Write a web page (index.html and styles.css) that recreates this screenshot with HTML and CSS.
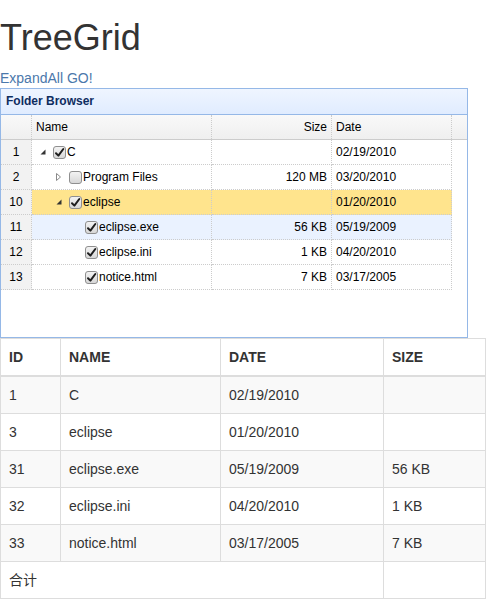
FILE: index.html
```html
<!DOCTYPE html>
<html>
<head>
<meta charset="utf-8">
<title>TreeGrid</title>
<link rel="stylesheet" href="styles.css">
</head>
<body>
<h1 class="title">TreeGrid</h1>
<div class="links"><a href="#">ExpandAll</a> <a href="#">GO!</a></div>

<div class="panel">
  <div class="panel-header">Folder Browser</div>
  <div class="panel-body">
    <div class="grid-head">
      <div class="c rn"></div>
      <div class="c name">Name</div>
      <div class="c size">Size</div>
      <div class="c date">Date</div>
    </div>

    <div class="row">
      <div class="c rn">1</div>
      <div class="c name">
        <span class="hit"><svg width="16" height="16" viewBox="0 0 16 16"><polygon points="10.5,5.5 10.5,10.5 5.5,10.5" fill="#333"/></svg></span>
        <span class="chk"><svg width="16" height="16" viewBox="0 0 16 16"><use href="#cb-on"/></svg></span>
        <span class="txt">C</span>
      </div>
      <div class="c size"></div>
      <div class="c date">02/19/2010</div>
    </div>

    <div class="row">
      <div class="c rn">2</div>
      <div class="c name">
        <span class="indent"></span>
        <span class="hit"><svg width="16" height="16" viewBox="0 0 16 16"><polygon points="5.5,4.5 9.5,8 5.5,11.5" fill="none" stroke="#8a8a8a" stroke-width="1"/></svg></span>
        <span class="chk"><svg width="16" height="16" viewBox="0 0 16 16"><use href="#cb-off"/></svg></span>
        <span class="txt">Program Files</span>
      </div>
      <div class="c size">120 MB</div>
      <div class="c date">03/20/2010</div>
    </div>

    <div class="row selected">
      <div class="c rn">10</div>
      <div class="c name">
        <span class="indent"></span>
        <span class="hit"><svg width="16" height="16" viewBox="0 0 16 16"><polygon points="10.5,5.5 10.5,10.5 5.5,10.5" fill="#333"/></svg></span>
        <span class="chk"><svg width="16" height="16" viewBox="0 0 16 16"><use href="#cb-on"/></svg></span>
        <span class="txt">eclipse</span>
      </div>
      <div class="c size"></div>
      <div class="c date">01/20/2010</div>
    </div>

    <div class="row hover">
      <div class="c rn">11</div>
      <div class="c name">
        <span class="indent"></span><span class="indent"></span><span class="indent"></span>
        <span class="chk"><svg width="16" height="16" viewBox="0 0 16 16"><use href="#cb-on"/></svg></span>
        <span class="txt">eclipse.exe</span>
      </div>
      <div class="c size">56 KB</div>
      <div class="c date">05/19/2009</div>
    </div>

    <div class="row">
      <div class="c rn">12</div>
      <div class="c name">
        <span class="indent"></span><span class="indent"></span><span class="indent"></span>
        <span class="chk"><svg width="16" height="16" viewBox="0 0 16 16"><use href="#cb-on"/></svg></span>
        <span class="txt">eclipse.ini</span>
      </div>
      <div class="c size">1 KB</div>
      <div class="c date">04/20/2010</div>
    </div>

    <div class="row">
      <div class="c rn">13</div>
      <div class="c name">
        <span class="indent"></span><span class="indent"></span><span class="indent"></span>
        <span class="chk"><svg width="16" height="16" viewBox="0 0 16 16"><use href="#cb-on"/></svg></span>
        <span class="txt">notice.html</span>
      </div>
      <div class="c size">7 KB</div>
      <div class="c date">03/17/2005</div>
    </div>
  </div>
</div>

<table class="table">
  <colgroup>
    <col class="w-id"><col class="w-name"><col class="w-date"><col class="w-size">
  </colgroup>
  <thead>
    <tr><th>ID</th><th>NAME</th><th>DATE</th><th>SIZE</th></tr>
  </thead>
  <tbody>
    <tr class="odd"><td>1</td><td>C</td><td>02/19/2010</td><td></td></tr>
    <tr><td>3</td><td>eclipse</td><td>01/20/2010</td><td></td></tr>
    <tr class="odd"><td>31</td><td>eclipse.exe</td><td>05/19/2009</td><td>56 KB</td></tr>
    <tr><td>32</td><td>eclipse.ini</td><td>04/20/2010</td><td>1 KB</td></tr>
    <tr class="odd"><td>33</td><td>notice.html</td><td>03/17/2005</td><td>7 KB</td></tr>
    <tr><td colspan="3" class="total">合计</td><td></td></tr>
  </tbody>
</table>

<svg class="defs" width="0" height="0">
  <defs>
    <linearGradient id="cbg" x1="0" y1="0" x2="0" y2="1">
      <stop offset="0" stop-color="#f4f4f4"/>
      <stop offset="1" stop-color="#d6d6d6"/>
    </linearGradient>
    <g id="cb-off">
      <rect x="2.5" y="2.5" width="12" height="12" rx="2.5" fill="url(#cbg)" stroke="#8f8f8f"/>
    </g>
    <g id="cb-on">
      <rect x="2.5" y="2.5" width="12" height="12" rx="2.5" fill="url(#cbg)" stroke="#8f8f8f"/>
      <path d="M5 9.2 L7.4 11.6 L12.3 5" fill="none" stroke="#1e1e1e" stroke-width="2" stroke-linecap="round" stroke-linejoin="round"/>
    </g>
  </defs>
</svg>
</body>
</html>
```

FILE: styles.css
```css
html, body {
  margin: 0;
  padding: 0;
}
body {
  font-family: "Liberation Sans", Arial, "Noto Sans CJK SC", sans-serif;
  font-size: 14px;
  line-height: 20px;
  color: #333;
  background: #fff;
}
.title {
  font-size: 36px;
  font-weight: 400;
  line-height: 40px;
  margin: 18px 0 10px;
  color: #333;
}
.links {
  height: 20px;
  line-height: 20px;
}
.links a {
  color: #4b78ab;
  text-decoration: none;
}
.panel {
  width: 468px;
  height: 250px;
  box-sizing: border-box;
  border: 1px solid #95b8e7;
  display: flex;
  flex-direction: column;
}
.panel-header {
  height: 25px;
  border-bottom: 1px solid #95b8e7;
  background: linear-gradient(to bottom, #eff5ff 0, #e0ecff 100%);
  font-size: 12px;
  font-weight: bold;
  color: #0e2d5f;
  line-height: 25px;
  padding-left: 5px;
}
.panel-body {
  flex: 1;
  background: #fff;
  font-size: 12px;
  color: #000;
}
.grid-head {
  display: flex;
  height: 25px;
  box-sizing: border-box;
  border-bottom: 1px solid #ccc;
  background: linear-gradient(to bottom, #f9f9f9 0, #efefef 100%);
}
.row {
  display: flex;
  height: 25px;
}
.c {
  box-sizing: border-box;
  border-right: 1px dotted #ccc;
  display: flex;
  align-items: center;
  white-space: nowrap;
  overflow: hidden;
}
.row .c {
  border-bottom: 1px dotted #ccc;
}
.rn {
  width: 31px;
  justify-content: center;
  background: #f2f2f2;
  color: #000;
}
.grid-head .rn {
  background: transparent;
}
.name {
  width: 180px;
  padding-left: 3px;
}
.size {
  width: 120px;
  justify-content: flex-end;
  padding-right: 4px;
}
.date {
  width: 120px;
  padding-left: 4px;
}
.grid-head .name {
  padding-left: 4px;
}
.row.selected .c {
  background: #ffe48d;
}
.row.selected .rn,
.row.hover .rn {
  background: #f2f2f2;
}
.row.hover .c:not(.rn) {
  background: #eaf2ff;
}
.indent, .hit, .chk {
  display: inline-block;
  width: 16px;
  height: 16px;
  flex: none;
}
.hit svg, .chk svg {
  display: block;
}
.txt {
  padding-left: 0;
}
.defs {
  position: absolute;
  width: 0;
  height: 0;
}
.table {
  width: 485px;
  border-collapse: collapse;
  border-spacing: 0;
  table-layout: fixed;
  border: 1px solid #ddd;
  font-size: 14px;
  color: #333;
}
.w-id { width: 60px; }
.w-name { width: 160px; }
.w-date { width: 163px; }
.w-size { width: 102px; }
.table th,
.table td {
  padding: 8px;
  line-height: 20px;
  border: 1px solid #ddd;
  text-align: left;
  vertical-align: top;
}
.table th {
  font-weight: bold;
  vertical-align: bottom;
  border-bottom: 2px solid #ddd;
}
.table tr.odd td {
  background: #f9f9f9;
}
```
